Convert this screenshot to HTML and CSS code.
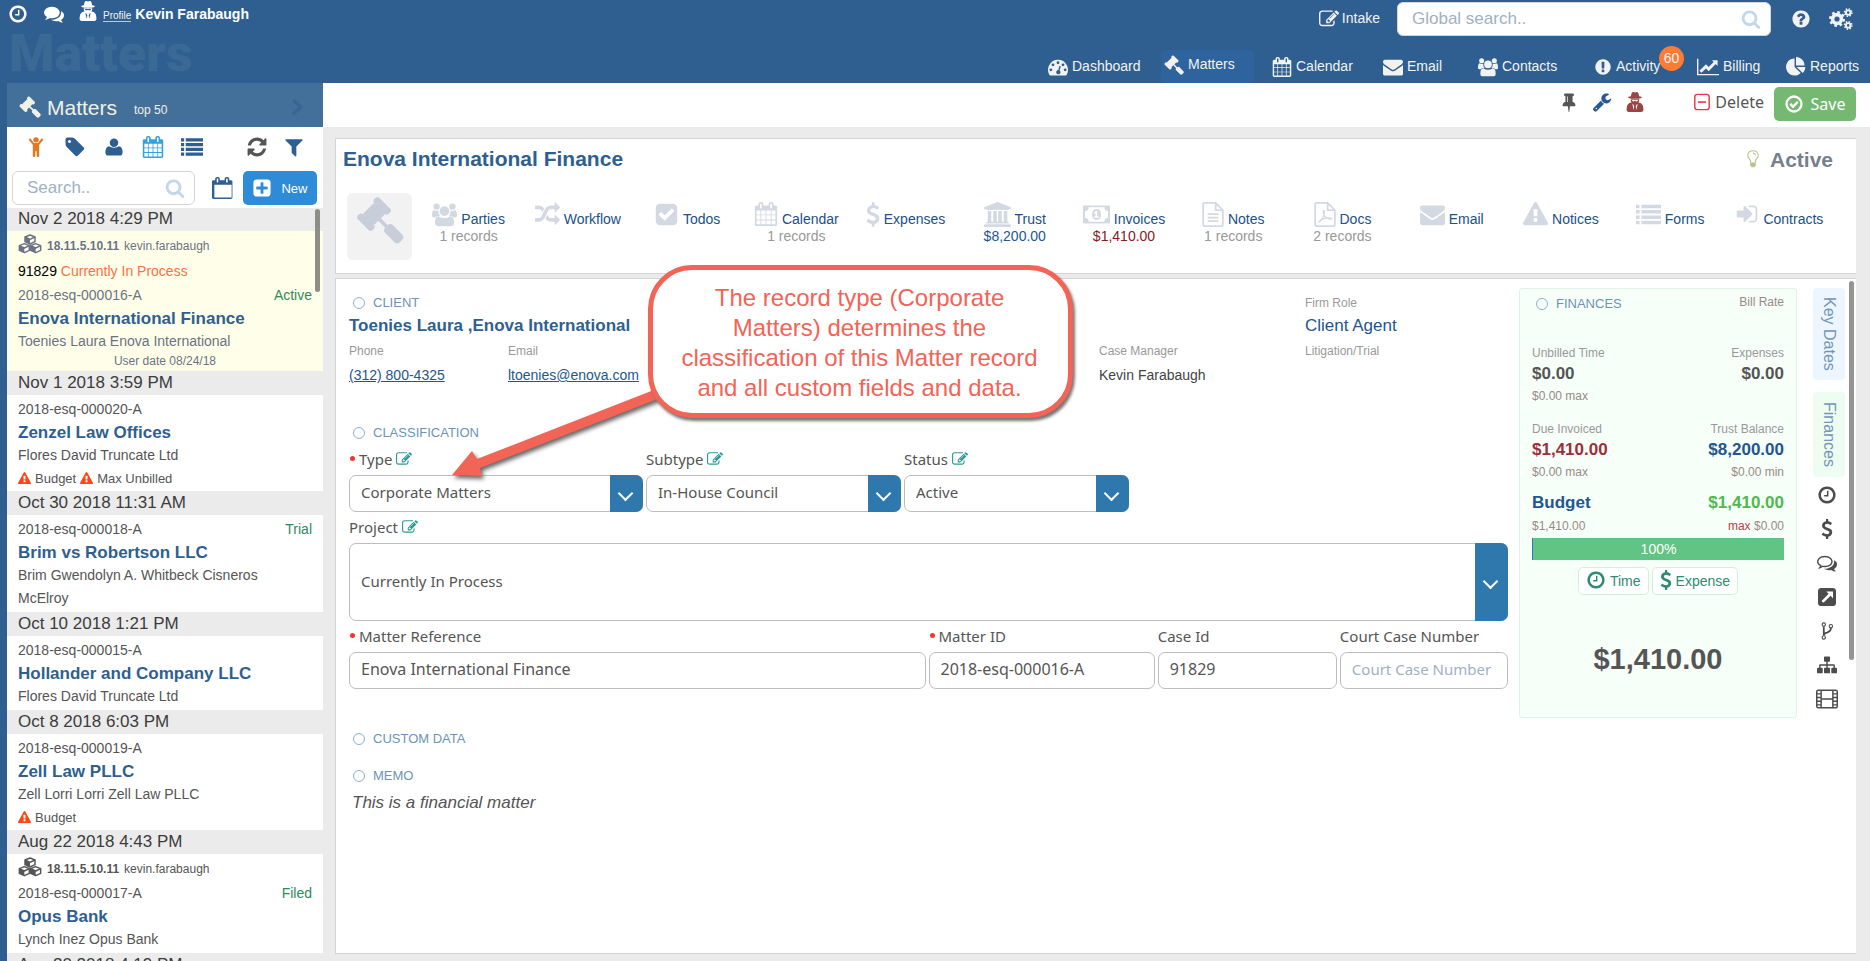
FILE: index.html
```html
<!DOCTYPE html>
<html lang="en">
<head>
<meta charset="utf-8">
<title>Matters</title>
<link rel="stylesheet" href="styles.css">
</head>
<body>
<svg class="sprite" aria-hidden="true">
  <symbol id="clock" viewBox="0 0 1792 1792"><path d="M1024 544v448q0 14-9 23t-23 9h-320q-14 0-23-9t-9-23v-64q0-14 9-23t23-9h224v-352q0-14 9-23t23-9h64q14 0 23 9t9 23zm416 352q0-148-73-273t-198-198-273-73-273 73-198 198-73 273 73 273 198 198 273 73 273-73 198-198 73-273zm224 0q0 209-103 385.500t-279.500 279.500-385.500 103-385.500-103-279.500-279.500-103-385.500 103-385.500 279.500-279.500 385.500-103 385.500 103 279.500 279.500 103 385.500z"/></symbol>
  <symbol id="search" viewBox="0 0 1792 1792"><path d="M1216 832q0-185-131.500-316.500t-316.500-131.500-316.500 131.500-131.500 316.500 131.500 316.500 316.500 131.500 316.500-131.500 131.500-316.500zm512 832q0 52-38 90t-90 38q-54 0-90-38l-343-342q-179 124-399 124-143 0-273.500-55.500t-225-150-150-225-55.500-273.500 55.500-273.500 150-225 225-150 273.500-55.500 273.500 55.500 225 150 150 225 55.500 273.500q0 220-124 399l343 343q37 37 37 90z"/></symbol>
  <symbol id="envelope" viewBox="0 0 1792 1792"><path d="M1792 710v794q0 66-47 113t-113 47h-1472q-66 0-113-47t-47-113v-794q44 49 101 87 362 246 497 345 57 42 92.500 65.500t94.500 48 110 24.500h2q51 0 110-24.500t94.500-48 92.500-65.500q170-123 498-345 57-39 100-87zm0-294q0 79-49 151t-122 123q-376 261-468 325-10 7-42.500 31t-54 38.500-52 32.500-57.500 27-50 9h-2q-23 0-50-9t-57.500-27-52-32.500-54-38.500-42.500-31q-91-64-262-182.500t-205-142.500q-62-42-117-115.500t-55-136.500q0-78 41.500-130t118.500-52h1472q65 0 112.500 47t47.500 113z"/></symbol>
  <symbol id="calendar" viewBox="0 0 1792 1792"><path d="M192 1664h288v-288h-288v288zm352 0h320v-288h-320v288zm-352-352h288v-320h-288v320zm352 0h320v-320h-320v320zm-352-384h288v-288h-288v288zm736 736h320v-288h-320v288zm-384-736h320v-288h-320v288zm768 736h288v-288h-288v288zm-384-352h320v-320h-320v320zm-352-864v-288q0-13-9.500-22.500t-22.500-9.500h-64q-13 0-22.500 9.500t-9.500 22.500v288q0 13 9.500 22.500t22.500 9.500h64q13 0 22.500-9.500t9.500-22.500zm736 864h288v-320h-288v320zm-384-384h320v-288h-320v288zm384 0h288v-288h-288v288zm32-480v-288q0-13-9.500-22.500t-22.500-9.500h-64q-13 0-22.500 9.500t-9.500 22.500v288q0 13 9.500 22.500t22.500 9.500h64q13 0 22.500-9.500t9.500-22.500zm384-64v1280q0 52-38 90t-90 38h-1408q-52 0-90-38t-38-90v-1280q0-52 38-90t90-38h128v-96q0-66 47-113t113-47h64q66 0 113 47t47 113v96h384v-96q0-66 47-113t113-47h64q66 0 113 47t47 113v96h128q52 0 90 38t38 90z"/></symbol>
  <symbol id="calendar-o" viewBox="0 0 1792 1792"><path fill-rule="evenodd" d="M192 1664h1408v-1024h-1408zM128 256h128v-96q0-66 47-113t113-47h64q66 0 113 47t47 113v96h384v-96q0-66 47-113t113-47h64q66 0 113 47t47 113v96h128q52 0 90 38t38 90v1280q0 52-38 90t-90 38h-1408q-52 0-90-38t-38-90v-1280q0-52 38-90t90-38zM384 160v256q0 32 32 32h64q32 0 32-32v-256q0-32-32-32h-64q-32 0-32 32zM1152 160v256q0 32 32 32h64q32 0 32-32v-256q0-32-32-32h-64q-32 0-32 32z"/></symbol>
  <symbol id="gavel" viewBox="0 0 1792 1792"><path d="M1771 1536q0 53-37 90l-107 108q-39 37-91 37-53 0-90-37l-363-364q-38-36-38-90 0-53 43-96l-256-256-126 126q-14 14-34 14t-34-14q2 2 12.500 12t12.500 13 10 11.500 10 13.500 6 13.500 5.500 16.500 1.500 18q0 38-28 68-3 3-16.500 18t-19 20.500-18.500 16.500-22 15.500-22 9-26 4.500q-40 0-68-28l-408-408q-28-28-28-68 0-13 4.500-26t9-22 15.500-22 16.500-18.500 20.500-19 18-16.500q30-28 68-28 10 0 18 1.500t16.500 5.500 13.500 6 13.500 10 11.500 10 13 12.500 12 12.500q-14-14-14-34t14-34l348-348q14-14 34-14t34 14q-2-2-12.500-12t-12.500-13-10-11.500-10-13.500-6-13.500-5.500-16.500-1.500-18q0-38 28-68 3-3 16.500-18t19-20.500 18.500-16.500 22-15.500 22-9 26-4.500q40 0 68 28l408 408q28 28 28 68 0 13-4.500 26t-9 22-15.500 22-16.500 18.500-20.500 19-18 16.500q-30 28-68 28-10 0-18-1.500t-16.500-5.500-13.500-6-13.500-10-11.500-10-13-12.500-12-12.500q14 14 14 34t-14 34l-126 126 256 256q43-43 96-43 52 0 91 37l363 363q37 39 37 91z"/></symbol>
  <symbol id="warning" viewBox="0 0 1792 1792"><path d="M1024 1375v-190q0-14-9.500-23.500t-22.500-9.500h-192q-13 0-22.500 9.500t-9.500 23.500v190q0 14 9.500 23.500t22.500 9.500h192q13 0 22.500-9.500t9.500-23.500zm-2-374l18-459q0-12-10-19-13-11-24-11h-220q-11 0-24 11-10 7-10 21l17 457q0 10 10 16.500t24 6.500h185q14 0 23.500-6.500t10.500-16.500zm-14-934l768 1408q35 63-2 126-17 29-46.500 46t-63.500 17h-1536q-34 0-63.500-17t-46.500-46q-37-63-2-126l768-1408q17-31 47-49t65-18 65 18 47 49z"/></symbol>
  <symbol id="tag" viewBox="0 0 1792 1792"><path d="M576 448q0-53-37.500-90.500t-90.500-37.500-90.500 37.500-37.500 90.500 37.500 90.500 90.500 37.500 90.500-37.500 37.500-90.500zm1067 576q0 53-37 90l-491 492q-39 37-91 37-53 0-90-37l-715-716q-38-37-64.500-101t-26.500-117v-416q0-52 38-90t90-38h416q53 0 117 26.500t102 64.500l715 714q37 39 37 91z"/></symbol>
  <symbol id="user" viewBox="0 0 1792 1792"><path d="M1664 1399q0 109-62.500 187t-150.500 78h-1110q-88 0-150.500-78t-62.500-187q0-85 8.500-160.500t31.500-152 58.500-131 94-89 134.500-34.500q171 128 441 128t441-128q76 0 134.500 34.500t94 89 58.500 131 31.500 152 8.500 160.500zm-384-887q0 159-112.500 271.500t-271.500 112.500-271.500-112.500-112.500-271.500 112.500-271.500 271.500-112.500 271.500 112.500 112.500 271.500z"/></symbol>
  <symbol id="filter" viewBox="0 0 1792 1792"><path d="M1595 295q17 41-14 70l-493 493v742q0 42-39 59-13 5-25 5-27 0-45-19l-256-256q-19-19-19-45v-486l-493-493q-31-29-14-70 17-39 59-39h1280q42 0 59 39z"/></symbol>
  <symbol id="refresh" viewBox="0 0 1792 1792"><path d="M1639 1056q0 5-1 7-64 268-268 434.500t-478 166.500q-146 0-282.500-55t-243.500-157l-129 129q-19 19-45 19t-45-19-19-45v-448q0-26 19-45t45-19h448q26 0 45 19t19 45-19 45l-137 137q71 66 161 102t187 36q134 0 250-65t186-179q11-17 53-117 8-23 30-23h192q13 0 22.500 9.500t9.500 22.500zm25-800v448q0 26-19 45t-45 19h-448q-26 0-45-19t-19-45 19-45l138-138q-148-137-349-137-134 0-250 65t-186 179q-11 17-53 117-8 23-30 23h-199q-13 0-22.500-9.500t-9.500-22.500v-7q65-268 270-434.500t480-166.500q146 0 284 55.500t245 156.500l130-129q19-19 45-19t45 19 19 45z"/></symbol>
  <symbol id="comments" viewBox="0 0 1792 1792"><path d="M1408 768q0 139-94 257t-256.500 186.500-353.500 68.500q-86 0-176-16-124 88-278 128-36 9-86 16h-3q-11 0-20.500-8t-11.500-21q-1-3-1-6.500t.5-6.500 2-6l2.500-5 3.500-5.500 4-5 4.500-5 4-4.500q5-6 23-25t26-29.500 22.500-29 25-38.500 20.500-44q-124-72-195-177t-71-224q0-139 94-257t256.500-186.500 353.500-68.500 353.500 68.500 256.500 186.500 94 257zm384 256q0 120-71 224.500t-195 176.500q10 24 20.500 44t25 38.500 22.500 29 26 29.500 23 25q1 1 4 4.500t4.500 5 4 5 3.500 5.500l2.500 5 2 6 .5 6.500-1 6.500q-3 14-13 22t-22 7q-50-7-86-16-154-40-278-128-90 16-176 16-271 0-472-132 58 4 88 4 161 0 309-45t264-129q125-92 192-212t67-254q0-77-23-152 129 71 204 178t75 230z"/></symbol>
  <symbol id="comments-o" viewBox="0 0 1792 1792"><path d="M704 384q-153 0-286 52t-211.500 141-78.500 191q0 82 53 158t149 132l97 56-35 84q34-20 62-39l44-31 53 10q78 14 153 14 153 0 286-52t211.500-141 78.500-191-78.500-191-211.500-141-286-52zm0-128q191 0 353.500 68.500t256.500 186.500 94 257-94 257-256.500 186.500-353.500 68.500q-86 0-176-16-124 88-278 128-36 9-86 16h-3q-11 0-20.500-8t-11.500-21q-1-3-1-6.500t.5-6.500 2-6l2.500-5 3.500-5.500 4-5 4.500-5 4-4.500q5-6 23-25t26-29.500 22.500-29 25-38.500 20.500-44q-124-72-195-177t-71-224q0-139 94-257t256.500-186.500 353.500-68.500zm822 1169q10 24 20.500 44t25 38.500 22.500 29 26 29.500 23 25q1 1 4 4.500t4.500 5 4 5 3.500 5.500l2.500 5 2 6 .5 6.500-1 6.500q-3 14-13 22t-22 7q-50-7-86-16-154-40-278-128-90 16-176 16-271 0-472-132 58 4 88 4 161 0 309-45t264-129q125-92 192-212t67-254q0-77-23-152 129 71 204 178t75 230q0 120-71 224.500t-195 176.500z"/></symbol>
  <symbol id="edit" viewBox="0 0 1792 1792"><path d="M888 1184l116-116-152-152-116 116v56h96v96h56zm440-720q-16-16-33 1l-350 350q-17 17-1 33t33-1l350-350q17-17 1-33zm80 594v190q0 119-84.500 203.500t-203.500 84.500h-832q-119 0-203.500-84.500t-84.500-203.500v-832q0-119 84.500-203.500t203.500-84.500h832q63 0 117 25 15 7 18 23 3 17-9 29l-49 49q-14 14-32 8-23-6-45-6h-832q-66 0-113 47t-47 113v832q0 66 47 113t113 47h832q66 0 113-47t47-113v-126q0-13 9-22l64-64q15-15 35-7t20 29zm-96-738l288 288-672 672h-288v-288zm444 132l-92 92-288-288 92-92q28-28 68-28t68 28l152 152q28 28 28 68t-28 68z"/></symbol>
  <symbol id="question" viewBox="0 0 1792 1792"><path d="M1024 1376v-192q0-14-9-23t-23-9h-192q-14 0-23 9t-9 23v192q0 14 9 23t23 9h192q14 0 23-9t9-23zm256-672q0-88-55.500-163t-138.500-116-170-41q-243 0-371 213-15 24 8 42l132 100q7 6 19 6 16 0 25-12 53-68 86-92 34-24 86-24 48 0 85.500 26t37.500 59q0 38-20 61t-68 45q-63 28-115.500 86.500t-52.500 125.500v36q0 14 9 23t23 9h192q14 0 23-9t9-23q0-19 21.500-49.500t54.500-49.500q32-18 49-28.500t46-35 44.500-48 28-60.500 12.500-81zm384 192q0 209-103 385.500t-279.500 279.500-385.500 103-385.500-103-279.500-279.500-103-385.500 103-385.500 279.500-279.500 385.500-103 385.500 103 279.500 279.500 103 385.500z"/></symbol>
  <symbol id="exclaim" viewBox="0 0 1792 1792"><path d="M896 128q209 0 385.500 103t279.500 279.500 103 385.500-103 385.500-279.500 279.500-385.500 103-385.500-103-279.500-279.500-103-385.500 103-385.500 279.500-279.500 385.500-103zm128 1247v-190q0-14-9-23.500t-22-9.500h-192q-13 0-23 10t-10 23v190q0 13 10 23t23 10h192q13 0 22-9.500t9-23.500zm-2-344l18-621q0-12-10-18-10-8-24-8h-220q-14 0-24 8-10 6-10 18l17 621q0 10 10 17.500t24 7.500h185q14 0 23.500-7.500t10.500-17.500z"/></symbol>
  <symbol id="plus-square" viewBox="0 0 1792 1792"><path d="M1408 960v-128q0-26-19-45t-45-19h-320v-320q0-26-19-45t-45-19h-128q-26 0-45 19t-19 45v320h-320q-26 0-45 19t-19 45v128q0 26 19 45t45 19h320v320q0 26 19 45t45 19h128q26 0 45-19t19-45v-320h320q26 0 45-19t19-45zm256-544v960q0 119-84.500 203.500t-203.500 84.500h-960q-119 0-203.500-84.500t-84.500-203.500v-960q0-119 84.500-203.500t203.500-84.500h960q119 0 203.500 84.500t84.500 203.500z"/></symbol>
  <symbol id="check-square" viewBox="0 0 1792 1792"><path d="M813 1299l614-614q19-19 19-45t-19-45l-102-102q-19-19-45-19t-45 19l-467 467-211-211q-19-19-45-19t-45 19l-102 102q-19 19-19 45t19 45l358 358q19 19 45 19t45-19zm851-883v960q0 119-84.500 203.500t-203.500 84.500h-960q-119 0-203.500-84.500t-84.500-203.500v-960q0-119 84.500-203.500t203.500-84.500h960q119 0 203.500 84.500t84.500 203.500z"/></symbol>
  <symbol id="random" viewBox="0 0 1792 1792"><path d="M666 481q-60 92-137 273-22-45-37-72.500t-40.500-63.500-51-56.500-63-35-81.500-14.500h-224q-14 0-23-9t-9-23v-192q0-14 9-23t23-9h224q250 0 410 225zm1126 799q0 14-9 23l-320 320q-9 9-23 9-13 0-22.500-9.500t-9.500-22.500v-192q-32 0-85 .5t-81 1-73-1-71-5-64-10.500-63-18.500-58-28.500-59-40-55-53.500-56-69.500q59-93 136-273 22 45 37 72.500t40.500 63.500 51 56.500 63 35 81.500 14.500h256v-192q0-14 9-23t23-9q12 0 24 10l319 319q9 9 9 23zm0-896q0 14-9 23l-320 320q-9 9-23 9-13 0-22.500-9.500t-9.500-22.500v-192h-256q-48 0-87 15t-69 45-51 61.500-45 77.500q-32 62-78 171-29 66-49.500 111t-54 105-64 100-74 83-90 68.500-106.500 42-128 16.500h-224q-14 0-23-9t-9-23v-192q0-14 9-23t23-9h224q48 0 87-15t69-45 51-61.500 45-77.500q32-62 78-171 29-66 49.500-111t54-105 64-100 74-83 90-68.500 106.500-42 128-16.500h256v-192q0-14 9-23t23-9q12 0 24 10l319 319q9 9 9 23z"/></symbol>
  <symbol id="usd" viewBox="384 0 1024 1792"><path d="M1362 1185q0 153-99.500 263.500t-258.500 136.500v175q0 14-9 23t-23 9h-135q-13 0-22.500-9.500t-9.500-22.500v-175q-66-9-127.500-31t-101.500-44.500-74-48-46.500-37.500-17.500-18q-17-21-2-41l103-135q7-10 23-12 15-2 24 9l2 2q113 99 243 125 37 8 74 8 81 0 142.500-43t61.500-122q0-28-15-53t-33.500-42-58.500-37.500-66-32-80-32.500q-39-16-61.500-25t-61.500-26.500-62.500-31-56.500-35.500-53.500-42.500-43.500-49-35.500-58-21-66.500-8.500-78q0-138 98-242t255-134v-180q0-13 9.500-22.500t22.500-9.500h135q14 0 23 9t9 23v176q57 6 110.500 23t87 33.500 63.500 37.500 39 29 15 14q17 18 5 38l-81 146q-8 15-23 16-14 3-27-7-3-3-14.500-12t-39-26.500-58.500-32-74.500-26-85.500-11.500q-95 0-155 43t-60 111q0 26 8.500 48t29.500 41.500 39.500 33 56 31 60.500 27 70 27.500q53 20 81 31.500t76 35 75.500 42.500 62 50 53 63.500 31.500 76.500 13 94z"/></symbol>
  <symbol id="sign-in" viewBox="0 0 1792 1792"><path d="M1312 896q0 26-19 45l-544 544q-19 19-45 19t-45-19-19-45v-288h-448q-26 0-45-19t-19-45v-384q0-26 19-45t45-19h448v-288q0-26 19-45t45-19 45 19l544 544q19 19 19 45zm352-352v704q0 119-84.500 203.500t-203.500 84.500h-320q-13 0-22.500-9.500t-9.500-22.500q0-4-1-20t-.5-26.500 3-23.500 10-19.500 20.500-6.500h320q66 0 113-47t47-113v-704q0-66-47-113t-113-47h-312l-11.500-1-11.500-3-8-5.500-7-9-2-13.500q0-4-1-20t-.5-26.500 3-23.500 10-19.500 20.500-6.500h320q119 0 203.500 84.500t84.500 203.500z"/></symbol>
  <symbol id="pin" viewBox="0 0 1792 1792"><path d="M800 864v-448q0-14-9-23t-23-9-23 9-9 23v448q0 14 9 23t23 9 23-9 9-23zm672 352q0 26-19 45t-45 19h-429l-51 483q-2 12-10.500 20.500t-20.500 8.500h-1q-27 0-32-27l-76-485h-404q-26 0-45-19t-19-45q0-123 78.500-221.500t177.500-98.500v-512q-52 0-90-38t-38-90 38-90 90-38h640q52 0 90 38t38 90-38 90-90 38v512q99 0 177.500 98.500t78.500 221.500z"/></symbol>
  <symbol id="wrench" viewBox="0 0 1792 1792"><path d="M448 1472q0-26-19-45t-45-19-45 19-19 45 19 45 45 19 45-19 19-45zm644-420l-682 682q-37 37-90 37-52 0-91-37l-106-108q-38-36-38-90 0-53 38-91l681-681q39 98 114.500 173.500t173.500 114.500zm634-435q0 39-23 106-47 134-164.500 217.500t-258.500 83.500q-185 0-316.500-131.500t-131.500-316.500 131.500-316.500 316.500-131.500q58 0 121.500 16.500t107.500 46.500q16 11 16 28t-16 28l-293 169v224l193 107q5-3 79-48.500t135.500-81 70.500-35.500q15 0 23.500 10t8.500 25z"/></symbol>
  <symbol id="line-chart" viewBox="0 0 2048 1792"><path d="M2048 1536v128h-2048v-1536h128v1408h1920zm-128-1248v435q0 21-19.500 29.500t-35.500-7.500l-121-121-633 633q-10 10-23 10t-23-10l-233-233-416 416-192-192 585-585q10-10 23-10t23 10l233 233 464-464-121-121q-16-16-7.500-35.500t29.500-19.500h435q14 0 23 9t9 23z"/></symbol>
  <symbol id="pie-chart" viewBox="0 0 1792 1792"><path d="M768 890l546 546q-106 108-247.500 168t-298.500 60q-209 0-385.500-103t-279.500-279.500-103-385.500 103-385.500 279.500-279.500 385.500-103v762zm187 6h773q0 157-60 298.500t-168 247.500zm709-128h-768v-768q209 0 385.500 103t279.500 279.500 103 385.500z"/></symbol>
  <symbol id="list" viewBox="0 0 28 24"><path d="M0 1h4v4H0zM6 1h22v4H6zM0 7h4v4H0zM6 7h22v4H6zM0 13h4v4H0zM6 13h22v4H6zM0 19h4v4H0zM6 19h22v4H6z"/></symbol>
  <symbol id="dash" viewBox="0 0 28 24"><path fill-rule="evenodd" d="M14 2a14 14 0 0 1 11.700 21.500q-.3.500-1 .5H3.300q-.7 0-1-.5A14 14 0 0 1 14 2zM4 14a2 2 0 1 0 0 4 2 2 0 0 0 0-4zM7 7a2 2 0 1 0 0 4 2 2 0 0 0 0-4zM14 4a2 2 0 1 0 0 4 2 2 0 0 0 0-4zM21 7a2 2 0 1 0 0 4 2 2 0 0 0 0-4zM24 14a2 2 0 1 0 0 4 2 2 0 0 0 0-4zM16 10.300l-1.600 6a3 3 0 1 0 1.900.6l1.600-6.100z"/></symbol>
  <symbol id="users" viewBox="0 0 30 28"><circle cx="5.500" cy="4.500" r="3.800"/><circle cx="24.500" cy="4.500" r="3.800"/><path d="M2 8.500q3.500 2 6 .5-1 4 2 6.500-4-.3-6 2H2q-2 0-2-2 0-6 2-7zM28 8.500q-3.500 2-6 .5 1 4-2 6.500 4-.3 6 2h2q2 0 2-2 0-6-2-7z"/><circle cx="15" cy="10" r="5.800"/><path d="M8 16q7 4.500 14 0 4.500.5 4.500 8 0 4-4 4h-15q-4 0-4-4 0-7.500 4.500-8z"/></symbol>
  <symbol id="cogs" viewBox="0 0 30 28"><g fill="none" stroke="currentColor"><circle cx="10" cy="14" r="5.500" stroke-width="4.500"/><circle cx="10" cy="14" r="8.500" stroke-width="3" stroke-dasharray="3.340 3.340"/><circle cx="24" cy="6" r="2.800" stroke-width="2.400"/><circle cx="24" cy="6" r="4.600" stroke-width="2" stroke-dasharray="1.806 1.806"/><circle cx="24" cy="22" r="2.800" stroke-width="2.400"/><circle cx="24" cy="22" r="4.600" stroke-width="2" stroke-dasharray="1.806 1.806"/></g></symbol>
  <symbol id="spy" viewBox="0 0 22 26"><path d="M6.500 1.500Q8-.8 11 .8q3-1.600 4.500.7l.8 4 3 .8q1 .7 0 1.400l-3.300 1H6l-3.300-1q-1-.7 0-1.400l3-.8z"/><path fill-rule="evenodd" d="M5.500 9.500h11q.5 2.500-1 4.300 6.500.7 6.500 8.700 0 3.500-3 3.500H3q-3 0-3-3.500 0-8 6.500-8.700-1.500-1.800-1-4.300zM7 10.500q.3 1.700 1.900 1.700 1.300 0 2.100-1.300.8 1.300 2.100 1.300 1.600 0 1.900-1.700zM7.500 15.800l2 7.700.5-5-1-2.200zM14.500 15.800l-2 7.700-.5-5 1-2.200z"/></symbol>
  <symbol id="child" viewBox="0 0 20 28"><circle cx="10" cy="4" r="3.800"/><path d="M2.600 2.500L7 8.500h6l4.400-6q1-1 2 0 .9.900.3 2L14.500 11v16q-.3 1-1.700 1-1.500 0-1.800-1v-7H9v7q-.3 1-1.800 1-1.400 0-1.700-1V11L.3 4.500q-.6-1.100.3-2 1-1 2 0z"/></symbol>
  <symbol id="cubes" viewBox="0 0 36 30"><g fill="none" stroke="currentColor" stroke-width="2.200" stroke-linejoin="round"><path d="M18 1.500l7.500 3v7L18 15l-7.500-3.500v-7zM9.500 14.500l7.500 3v7L9.500 28 2 24.500v-7zM26.500 14.500l7.500 3v7L26.500 28 19 24.500v-7z"/><path d="M10.500 4.500L18 8l7.500-3.500M2 17.500L9.500 21l7.500-3.500M19 17.500l7.500 3.500 7.500-3.500"/></g><path d="M18 8v7l-7.500-3.500v-7zM9.500 21v7L2 24.500v-7zM26.500 21v7L19 24.500v-7z"/></symbol>
  <symbol id="bank" viewBox="0 0 30 28"><path d="M15 0l15 6v2h-2.500q0 1-1 1h-23q-1 0-1-1H0V6zM4 10h4v12h2.200V10h4v12h1.600V10h4v12H22V10h4v12h.5q1 0 1 1v1h-25v-1q0-1 1-1H4zM1.500 25h27q1.500 0 1.500 1v2H0v-2q0-1 1.500-1z"/></symbol>
  <symbol id="money" viewBox="0 0 30 20"><path fill-rule="evenodd" d="M1 0h28q1 0 1 1v18q0 1-1 1H1q-1 0-1-1V1q0-1 1-1zM2.200 6v8q4 0 4 4h17.600q0-4 4-4V6q-4 0-4-4H6.200q0 4-4 4zM15 4q5 0 5 6t-5 6-5-6 5-6zM12.500 12v1.700h5V12h-1.700V6h-1.600L12 8l1 1.200 1-.7V12z"/></symbol>
  <symbol id="file-text" viewBox="0 0 24 28"><g fill="none" stroke="currentColor" stroke-width="2"><path d="M2.500 1H15l8 8v16.500q0 1.500-1.500 1.500h-19Q1 27 1 25.500v-23Q1 1 2.500 1zM15 1v8h8M6 13.500h12M6 17.500h12M6 21.500h12"/></g></symbol>
  <symbol id="file-pdf" viewBox="0 0 24 28"><g fill="none" stroke="currentColor" stroke-width="2"><path d="M2.500 1H15l8 8v16.500q0 1.500-1.500 1.500h-19Q1 27 1 25.500v-23Q1 1 2.500 1zM15 1v8h8"/><path stroke-width="1.300" d="M5 23q3-1.500 5.500-7.500Q12 11 11 9.500q-1-.5-1 1.500.5 5 5 7.500 4 1.500 4.500.5 0-1.500-4.500-1.200-5 .7-8 2.200Q5 21.500 5 23"/></g></symbol>
  <symbol id="check-circle" viewBox="0 0 20 20"><g fill="none" stroke="currentColor"><circle cx="10" cy="10" r="8.300" stroke-width="2.600"/><path stroke-width="2.600" d="M5.800 9.800l3.200 3.200 5.200-5.500"/></g></symbol>
  <symbol id="minus-square" viewBox="0 0 18 20"><rect x="1" y="1.500" width="16" height="17" rx="3" fill="none" stroke="currentColor" stroke-width="1.600"/><path d="M4.500 9.200h9v1.800h-9z"/></symbol>
  <symbol id="bulb" viewBox="0 0 16 24"><path fill="none" stroke="currentColor" stroke-width="1.500" d="M5 16.500q0-3-2-5Q1 9.500 1 7.200 1.500 1 8 1t7 6.200q0 2.300-2 4.300t-2 5M8 4.200q3 .3 3.300 2.800"/><path d="M4.200 16.500h7.600v4.300L9.500 23h-3l-2.300-2.200z"/></symbol>
  <symbol id="external" viewBox="0 0 24 24"><path fill-rule="evenodd" d="M4.500 0h15Q24 0 24 4.500v15q0 4.500-4.500 4.500h-15Q0 24 0 19.500v-15Q0 0 4.500 0zM11 4.500l3.200 3.200-9.500 9.500 2.600 2.600 9.500-9.500 3.200 3.200v-9z"/></symbol>
  <symbol id="fork" viewBox="0 0 20 28"><g fill="none" stroke="currentColor"><g stroke-width="1.700"><circle cx="5" cy="4" r="2.600"/><circle cx="5" cy="24" r="2.600"/><circle cx="16" cy="6.500" r="2.600"/></g><path stroke-width="2.800" d="M5 7v14q0-3.500 5-4.500 6-1.500 6-7"/></g></symbol>
  <symbol id="sitemap" viewBox="0 0 28 24"><path d="M11 0h6q1.200 0 1.200 1.200v5Q18.200 7.400 17 7.400h-2V11h8.500q1.500 0 1.500 1.500V16h1.500q1.500 0 1.500 1.200v5.200q0 1.200-1.500 1.200h-5q-1.500 0-1.500-1.200v-5.200q0-1.200 1.500-1.200H23v-3h-8v3h2q1.200 0 1.200 1.200v5.200q0 1.200-1.200 1.200h-6q-1.200 0-1.200-1.200v-5.200Q9.800 16 11 16h2v-3H5v3h1.500Q8 16 8 17.200v5.200q0 1.200-1.500 1.200h-5Q0 23.600 0 22.400v-5.200Q0 16 1.500 16H3v-3.500Q3 11 4.500 11H13V7.400h-2q-1.200 0-1.200-1.200v-5Q9.800 0 11 0z"/></symbol>
  <symbol id="film" viewBox="0 0 30 26"><g fill="none" stroke="currentColor" stroke-width="2"><rect x="1" y="1" width="28" height="24" rx="2"/><path d="M7 1v24M23 1v24M7 13h16M1 6h6M1 11h6M1 16h6M1 21h6M23 6h6M23 11h6M23 16h6M23 21h6"/></g></symbol>
</svg>

<div class="app">
  <header class="top">
    <div class="top-left">
      <div class="who">
        <svg class="i20 first"><use href="#clock"/></svg>
        <svg class="i20"><use href="#comments"/></svg>
        <svg class="i18 tall"><use href="#spy"/></svg>
        <a class="profile" href="#">Profile</a>
        <strong>Kevin Farabaugh</strong>
      </div>
      <div class="watermark">Matters</div>
    </div>
    <div class="top-right">
      <div class="tools">
        <a class="intake" href="#"><svg class="i20"><use href="#edit"/></svg>Intake</a>
        <div class="search global"><input type="text" aria-label="Global search" placeholder="Global search.."><svg class="i20"><use href="#search"/></svg></div>
        <a class="help" href="#" aria-label="Help"><svg class="i20"><use href="#question"/></svg></a>
        <a href="#" aria-label="Settings"><svg class="i24"><use href="#cogs"/></svg></a>
      </div>
      <nav class="nav">
        <a href="#"><svg class="i20"><use href="#dash"/></svg>Dashboard</a>
        <a class="on" href="#"><svg class="i20"><use href="#gavel"/></svg>Matters</a>
        <a href="#"><svg class="i20"><use href="#calendar"/></svg>Calendar</a>
        <a href="#"><svg class="i20"><use href="#envelope"/></svg>Email</a>
        <a href="#"><svg class="i20"><use href="#users"/></svg>Contacts</a>
        <a href="#"><svg class="i18"><use href="#exclaim"/></svg><span class="has-badge">Activity<span class="badge">60</span></span></a>
        <a href="#"><svg class="i22"><use href="#line-chart"/></svg>Billing</a>
        <a href="#"><svg class="i20"><use href="#pie-chart"/></svg>Reports</a>
      </nav>
    </div>
  </header>

  <div class="body">
    <aside class="side">
      <div class="side-head">
        <svg class="i22"><use href="#gavel"/></svg><h1>Matters</h1><span>top 50</span>
        <svg class="chev" viewBox="0 0 12 18"><path d="M2 2l8 7-8 7" fill="none" stroke="currentColor" stroke-width="3"/></svg>
      </div>
      <div class="side-tools">
        <button class="orange" aria-label="Child"><svg class="i20"><use href="#child"/></svg></button>
        <button aria-label="Tags"><svg class="i22"><use href="#tag"/></svg></button>
        <button aria-label="People"><svg class="i20"><use href="#user"/></svg></button>
        <button class="sky" aria-label="Calendar"><svg class="i22"><use href="#calendar"/></svg></button>
        <button aria-label="List"><svg class="i22"><use href="#list"/></svg></button>
        <button class="grey end" aria-label="Refresh"><svg class="i22"><use href="#refresh"/></svg></button>
        <button aria-label="Filter"><svg class="i22"><use href="#filter"/></svg></button>
      </div>
      <div class="side-search">
        <div class="search"><input type="text" aria-label="Search" placeholder="Search.."><svg class="i20"><use href="#search"/></svg></div>
        <button class="cal" aria-label="Pick date"><svg class="i22"><use href="#calendar-o"/></svg></button>
        <button class="new"><svg class="i20"><use href="#plus-square"/></svg>New</button>
      </div>
      <div class="list">
        <div class="thumb"></div>
        <h2>Nov 2 2018 4:29 PM</h2>
        <div class="item sel">
          <div class="ver"><svg class="i24"><use href="#cubes"/></svg><b>18.11.5.10.11</b> kevin.farabaugh</div>
          <div class="proc"><span>91829</span> Currently In Process</div>
          <div class="row"><span>2018-esq-000016-A</span><span class="st">Active</span></div>
          <a href="#">Enova International Finance</a>
          <div class="row">Toenies Laura Enova International</div>
          <div class="udate">User date 08/24/18</div>
        </div>
        <h2>Nov 1 2018 3:59 PM</h2>
        <div class="item">
          <div class="row">2018-esq-000020-A</div>
          <a href="#">Zenzel Law Offices</a>
          <div class="row">Flores David Truncate Ltd</div>
          <div class="warn"><svg class="i13"><use href="#warning"/></svg>Budget<svg class="i13"><use href="#warning"/></svg>Max Unbilled</div>
        </div>
        <h2>Oct 30 2018 11:31 AM</h2>
        <div class="item">
          <div class="row"><span>2018-esq-000018-A</span><span class="st">Trial</span></div>
          <a href="#">Brim vs Robertson LLC</a>
          <div class="wrap">Brim Gwendolyn A. Whitbeck Cisneros McElroy</div>
        </div>
        <h2>Oct 10 2018 1:21 PM</h2>
        <div class="item">
          <div class="row">2018-esq-000015-A</div>
          <a href="#">Hollander and Company LLC</a>
          <div class="row">Flores David Truncate Ltd</div>
        </div>
        <h2>Oct 8 2018 6:03 PM</h2>
        <div class="item">
          <div class="row">2018-esq-000019-A</div>
          <a href="#">Zell Law PLLC</a>
          <div class="row">Zell Lorri Lorri Zell Law PLLC</div>
          <div class="warn"><svg class="i13"><use href="#warning"/></svg>Budget</div>
        </div>
        <h2>Aug 22 2018 4:43 PM</h2>
        <div class="item">
          <div class="ver"><svg class="i24"><use href="#cubes"/></svg><b>18.11.5.10.11</b> kevin.farabaugh</div>
          <div class="row"><span>2018-esq-000017-A</span><span class="st">Filed</span></div>
          <a href="#">Opus Bank</a>
          <div class="row">Lynch Inez Opus Bank</div>
        </div>
        <h2>Aug 20 2018 4:19 PM</h2>
      </div>
    </aside>

    <main class="main">
      <div class="actions">
        <button aria-label="Pin"><svg class="i20"><use href="#pin"/></svg></button>
        <button class="blue" aria-label="Tools"><svg class="i20"><use href="#wrench"/></svg></button>
        <button class="maroon" aria-label="Private"><svg class="i20"><use href="#spy"/></svg></button>
        <button class="delete"><svg class="i18"><use href="#minus-square"/></svg>Delete</button>
        <button class="save"><svg class="i18"><use href="#check-circle"/></svg>Save</button>
      </div>

      <section class="card head">
        <div class="head-top">
          <h2>Enova International Finance</h2>
          <div class="state"><svg class="bulb"><use href="#bulb"/></svg>Active</div>
        </div>
        <div class="tabs-row">
          <div class="tile"><svg><use href="#gavel"/></svg></div>
          <nav class="tabs">
            <a href="#"><span><svg class="i26"><use href="#users"/></svg>Parties</span><small>1 records</small></a>
            <a href="#"><span><svg class="i26"><use href="#random"/></svg>Workflow</span></a>
            <a href="#"><span><svg class="i26"><use href="#check-square"/></svg>Todos</span></a>
            <a href="#"><span><svg class="i24"><use href="#calendar"/></svg>Calendar</span><small>1 records</small></a>
            <a href="#"><span><svg class="dollar"><use href="#usd"/></svg>Expenses</span></a>
            <a href="#"><span><svg class="i28"><use href="#bank"/></svg>Trust</span><small class="t-blue">$8,200.00</small></a>
            <a href="#"><span><svg class="i28"><use href="#money"/></svg>Invoices</span><small class="t-red">$1,410.00</small></a>
            <a href="#"><span><svg class="i22 tall"><use href="#file-text"/></svg>Notes</span><small>1 records</small></a>
            <a href="#"><span><svg class="i22 tall"><use href="#file-pdf"/></svg>Docs</span><small>2 records</small></a>
            <a href="#"><span><svg class="i26"><use href="#envelope"/></svg>Email</span></a>
            <a href="#"><span><svg class="i26"><use href="#warning"/></svg>Notices</span></a>
            <a href="#"><span><svg class="i26"><use href="#list"/></svg>Forms</span></a>
            <a href="#"><span><svg class="i24"><use href="#sign-in"/></svg>Contracts</span></a>
          </nav>
        </div>
      </section>

      <section class="card detail">
        <div class="form">
          <div class="client">
            <div class="c-main">
              <h3 class="sec">CLIENT</h3>
              <a class="cname" href="#">Toenies Laura ,Enova International</a>
              <div class="pair">
                <div><span class="cap">Phone</span><a class="lnk" href="#">(312) 800-4325</a></div>
                <div><span class="cap">Email</span><a class="lnk" href="#">ltoenies@enova.com</a></div>
              </div>
            </div>
            <div class="c-mgr"><span class="cap">Case Manager</span><span class="val">Kevin Farabaugh</span></div>
            <div class="c-role"><span class="cap">Firm Role</span><span class="role">Client Agent</span><span class="cap">Litigation/Trial</span></div>
          </div>

          <h3 class="sec classif">CLASSIFICATION</h3>
          <div class="grid3">
            <div class="field"><label class="req" for="type">Type <svg class="i16"><use href="#edit"/></svg></label><div class="sel-box"><select id="type"><option>Corporate Matters</option></select></div></div>
            <div class="field"><label for="sub">Subtype <svg class="i16"><use href="#edit"/></svg></label><div class="sel-box"><select id="sub"><option>In-House Council</option></select></div></div>
            <div class="field"><label for="status">Status <svg class="i16"><use href="#edit"/></svg></label><div class="sel-box"><select id="status"><option>Active</option></select></div></div>
          </div>
          <div class="field"><label for="project">Project <svg class="i16"><use href="#edit"/></svg></label><div class="sel-box big"><select id="project"><option>Currently In Process</option></select></div></div>
          <div class="grid4">
            <div class="field"><label class="req" for="ref">Matter Reference</label><input id="ref" type="text" value="Enova International Finance"></div>
            <div class="field"><label class="req" for="mid">Matter ID</label><input id="mid" type="text" value="2018-esq-000016-A"></div>
            <div class="field"><label for="cid">Case Id</label><input id="cid" type="text" value="91829"></div>
            <div class="field"><label for="court">Court Case Number</label><input id="court" type="text" placeholder="Court Case Number"></div>
          </div>

          <h3 class="sec custom">CUSTOM DATA</h3>
          <h3 class="sec memo">MEMO</h3>
          <p class="memo-text">This is a financial matter</p>
        </div>

        <div class="fin">
          <div class="fr fin-top"><h3 class="sec">FINANCES</h3><span class="brown">Bill Rate</span></div>
          <div class="fr cap"><span>Unbilled Time</span><span>Expenses</span></div>
          <div class="fr num"><span>$0.00</span><span>$0.00</span></div>
          <div class="fr sub"><span>$0.00 max</span></div>
          <div class="fr cap"><span>Due Invoiced</span><span>Trust Balance</span></div>
          <div class="fr num"><span class="t-red2">$1,410.00</span><span class="t-blue">$8,200.00</span></div>
          <div class="fr sub"><span>$0.00 max</span><span>$0.00 min</span></div>
          <div class="fr num bud"><span class="t-blue">Budget</span><span class="t-green">$1,410.00</span></div>
          <div class="fr sub bud"><span>$1,410.00</span><span><i>max</i> $0.00</span></div>
          <div class="bar">100%</div>
          <div class="fbtns">
            <button><svg class="i20"><use href="#clock"/></svg>Time</button>
            <button><svg class="d20"><use href="#usd"/></svg>Expense</button>
          </div>
          <div class="total">$1,410.00</div>
        </div>

        <div class="rail">
          <a class="vt key" href="#">Key Dates</a>
          <a class="vt finv" href="#">Finances</a>
          <button aria-label="Time"><svg class="i20"><use href="#clock"/></svg></button>
          <button aria-label="Expense"><svg class="d20"><use href="#usd"/></svg></button>
          <button aria-label="Comments"><svg class="i20"><use href="#comments-o"/></svg></button>
          <button aria-label="Open"><svg class="i18"><use href="#external"/></svg></button>
          <button aria-label="Branch"><svg class="i18"><use href="#fork"/></svg></button>
          <button aria-label="Sitemap"><svg class="i20"><use href="#sitemap"/></svg></button>
          <button aria-label="Film"><svg class="i22"><use href="#film"/></svg></button>
        </div>
        <div class="thumb"></div>

        <div class="callout">
          <svg class="arrow" viewBox="0 0 220 100"><path d="M216 8L34 79l-5-8L9 95l30 1-2-8L220 17z"/></svg>
          <div class="bubble">The record type (Corporate Matters) determines the classification of this Matter record and all custom fields and data.</div>
        </div>
      </section>
    </main>
  </div>
</div>
</body>
</html>
```
FILE: styles.css
```css
* { box-sizing: border-box; }
body { margin: 0; font: 14px/23px "Liberation Sans", Arial, sans-serif; color: #555; background: #ebebeb; }
h1, h2, h3, p { margin: 0; font-weight: normal; }
a { text-decoration: none; color: #2e5f90; }
button { border: 0; padding: 0; background: none; font: inherit; color: inherit; display: flex; align-items: center; justify-content: center; cursor: pointer; }
input, select { font: inherit; color: inherit; min-width: 0; }
svg { fill: currentColor; flex: none; display: block; }
.sprite { display: none; }
.i13 { width: 13px; height: 13px; }
.i16 { width: 16px; height: 16px; }
.i18 { width: 18px; height: 18px; }
.i20 { width: 20px; height: 20px; }
.i22 { width: 22px; height: 22px; }
.i24 { width: 24px; height: 24px; }
.i26 { width: 25px; height: 25px; }
.i28 { width: 27px; height: 25px; }
.dollar { width: 14px; height: 25px; }
.d20 { width: 12px; height: 20px; }
.i18.tall { height: 20px; }
.i22.tall { height: 25px; }

.app { height: 100vh; display: flex; flex-direction: column; overflow: hidden; }

/* Header */
.top { height: 83px; flex: none; background: #2e5f90; color: #fff; display: flex; justify-content: space-between; }
.top a { color: #f2f2f2; }
.who { display: flex; align-items: center; height: 28px; padding-left: 8px; }
.who svg { margin-right: 15px; }
.who svg.first { margin-right: 16px; }
.who svg.tall { margin: 0 6px 6px 0; }
.who .profile { font-size: 10px; line-height: 11px; border-bottom: 1px solid #b9cadb; margin: 3px 4px 0 0; }
.watermark { font: 900 52px/52px Impact, Roboto, sans-serif; color: #3b6995; padding-left: 9px; }
.top-right { display: flex; flex-direction: column; align-items: flex-end; }
.tools { display: flex; align-items: center; height: 37px; padding-right: 17px; }
.intake { display: flex; align-items: center; gap: 3px; margin-right: 17px; }
.help { margin: 0 18px 0 20px; }
.search { position: relative; display: flex; flex: 1; color: #c3d7ea; }
.search input { flex: 1; width: 100%; height: 34px; border: 1px solid #d5d5d5; border-radius: 6px; padding: 0 36px 0 14px; font-size: 17px; color: #555; background: #fff; }
.search input::placeholder { color: #9fb1c2; opacity: 1; }
.search svg { position: absolute; right: 10px; top: 7px; }
.search.global { width: 374px; flex: none; }
.nav { display: grid; grid-template-columns: 117px 107px 111px 95px 116px 103px 89px 80px; margin-top: 13px; padding-right: 8px; }
.nav a { display: flex; align-items: center; gap: 4px; height: 33px; padding-left: 4px; }
.nav .on { background: #2e639d; border-radius: 4px; margin-right: 14px; padding: 0 0 4px 3px; }
.has-badge { position: relative; }
.badge { position: absolute; left: 43px; top: -9px; width: 25px; height: 25px; line-height: 25px; border-radius: 50%; background: #ff7a33; text-align: center; }

/* Sidebar */
.body { flex: 1; min-height: 0; display: flex; }
.side { width: 323px; flex: none; border-left: 7px solid #2e5f90; display: flex; flex-direction: column; background: #fff; }
.side-head { height: 44px; display: flex; align-items: center; background: #43709b; color: #f0f0e4; padding: 4px 20px 0 12px; flex: none; }
.side-head h1 { font-size: 21px; margin: 0 17px 0 6px; }
.side-head span { font-size: 12px; padding-top: 6px; }
.side-head .chev { width: 12px; height: 18px; margin-left: auto; color: #386491; }
.side-tools { display: flex; height: 40px; padding: 0 11px 0 9px; color: #2e5f90; flex: none; }
.side-tools button { width: 39px; }
.side-tools .orange { color: #e2781f; }
.side-tools .sky { color: #32a1dc; }
.side-tools .grey { color: #555; }
.side-tools .end { margin-left: auto; }
.side-tools .end, .side-tools .end + button { width: 37px; }
.side-search { display: flex; align-items: center; padding: 4px 6px 3px 5px; flex: none; }
.side-search .cal { color: #2e5f90; margin: 0 9px 0 17px; }
.side-search .new { width: 74px; height: 34px; border-radius: 5px; background: #2e8bd8; color: #fff; font-size: 13px; gap: 9px; }
.list { flex: 1; min-height: 0; overflow: hidden; position: relative; }
.list h2 { font-size: 17px; line-height: 24px; height: 24px; background: #ebebeb; color: #3c3c3c; padding-left: 11px; }
.list .thumb { position: absolute; right: 3px; top: 1px; width: 5px; height: 83px; border-radius: 3px; background: #8e8e88; }
.list .thumb + h2 { height: 23px; line-height: 22px; }
.item { padding: 3px 11px 2px; }
.item a { display: block; font-size: 17px; font-weight: bold; }
.row { display: flex; justify-content: space-between; }
.st { color: #2f8a5c; }
.sel { background: #ffffe9; color: #6b7285; }
.ver { display: flex; align-items: center; gap: 5px; height: 25px; font-size: 12px; }
.ver svg { margin-bottom: 6px; }
.proc { line-height: 25px; color: #ff7043; }
.proc span { color: #000; }
.udate { text-align: center; font-size: 12px; line-height: 16px; }
.warn { display: flex; align-items: center; gap: 4px; height: 22px; font-size: 13px; }
.warn svg { color: #ff4713; }

/* Main */
.main { flex: 1; min-width: 0; display: flex; flex-direction: column; }
.actions { height: 44px; flex: none; background: #fff; display: flex; align-items: center; justify-content: flex-end; padding: 0 14px 6px 0; font: 16px/24px "Noto Sans", sans-serif; }
.actions button { margin-right: 13px; color: #555; }
.actions .blue { color: #2b5797; }
.actions .maroon { color: #994545; margin-right: 48px; }
.actions .delete { gap: 4px; margin-right: 10px; }
.actions .delete svg { color: #e23c4c; }
.actions .save { background: #75b871; color: #fff; width: 82px; height: 34px; border-radius: 5px; gap: 8px; margin: 4px 0 0; }
.card { margin-left: 12px; margin-right: 14px; background: #fff; border: 1px solid #d5d5d5; border-right: 0; }
.head { height: 136px; flex: none; margin-top: 11px; }
.head-top { display: flex; justify-content: space-between; align-items: center; padding: 8px 23px 0 7px; }
.head-top h2 { font-size: 21px; font-weight: bold; color: #2e5f90; line-height: 24px; }
.state { font-size: 21px; font-weight: bold; color: #767f8b; display: flex; align-items: center; gap: 11px; }
.bulb { width: 12px; height: 18px; color: #b9c38c; }
.tabs-row { display: flex; padding: 22px 22px 0 11px; }
.tile { width: 65px; height: 67px; border-radius: 6px; background: #f2f2f2; display: flex; justify-content: center; padding-top: 3px; color: #c7ced9; }
.tile svg { width: 48px; height: 48px; }
.tabs { flex: 1; margin-left: 2px; display: grid; grid-template-columns: repeat(13, 1fr); padding-top: 9px; }
.tabs a { display: flex; flex-direction: column; align-items: center; color: #20508a; }
.tabs span { display: flex; gap: 4px; line-height: 35px; height: 25px; }
.tabs svg { color: #d3d9e3; }
.tabs small { font-size: 14px; line-height: 18px; color: #999; }
.tabs .t-blue, .t-blue { color: #23568f; }
.tabs .t-red { color: #8b1a1a; }
.t-red2 { color: #9c2f3b; }
.t-green { color: #4fb84f; }

.detail { position: relative; flex: 1; min-height: 0; margin-top: 4px; margin-bottom: 7px; display: flex; align-items: flex-start; padding: 9px 11px 0 13px; }
.form { flex: 1; min-width: 0; padding-top: 4px; }
.sec { font-size: 13px; line-height: 22px; color: #6a94b8; display: flex; align-items: center; gap: 8px; padding-left: 4px; }
.sec::before { content: ""; width: 10px; height: 10px; border: 1px solid #8cb0cc; border-radius: 50%; }
.client { display: flex; height: 119px; }
.c-main { flex: 750; }
.c-mgr { flex: 206; padding-top: 48px; }
.c-role { flex: 203; }
.client span, .cname, .lnk { display: block; }
.cname { font-size: 17px; font-weight: bold; line-height: 24px; }
.pair { display: flex; }
.pair > div { width: 159px; padding-top: 2px; }
.cap { font-size: 12px; color: #999; }
.client .cap { line-height: 22px; }
.pair .lnk { text-decoration: underline; line-height: 26px; color: #23568f; }
.c-mgr .val { line-height: 26px; color: #444; }
.c-role .role { font-size: 17px; line-height: 24px; margin-bottom: 2px; color: #23568f; }
.classif { margin-top: 11px; }
.field { font: 15px/20px "Noto Sans", sans-serif; }
.field label { display: flex; align-items: center; gap: 4px; height: 31px; padding-bottom: 2px; color: #555; }
.field label svg { color: #2d9a94; }
.req::before { content: ""; width: 5px; height: 5px; border-radius: 50%; background: #fa3232; margin-left: 1px; }
.field input, .field select { width: 100%; height: 37px; border: 1px solid #bdbdbd; border-radius: 7px; padding: 0 11px 3px; background: #fff; appearance: none; color: #555; }
.field input { font-size: 16px; }
.field input::placeholder { color: #9fb1c2; opacity: 1; font-size: 15px; }
.sel-box { position: relative; }
.sel-box::before { content: ""; position: absolute; right: 0; top: 0; bottom: 0; width: 33px; background: #2f78ad; border-radius: 0 7px 7px 0; pointer-events: none; }
.sel-box::after { content: ""; position: absolute; right: 12px; top: calc(50% - 6px); width: 9px; height: 9px; border: solid #fff; border-width: 0 2px 2px 0; transform: rotate(45deg); pointer-events: none; }
.sel-box.big select { height: 78px; padding-bottom: 2px; }
.grid3 { display: grid; grid-template-columns: 294fr 255fr 225fr 376fr; gap: 3px; }
.grid4 { display: grid; grid-template-columns: 576fr 226fr 179fr 168fr; gap: 3px; }
.custom { margin-top: 39px; }
.memo { margin-top: 15px; }
.memo-text { font-size: 17px; font-style: italic; line-height: 32px; padding-left: 3px; }

.fin { width: 278px; margin-left: 11px; height: 430px; background: #f7fff9; border: 1px solid #dff2ec; border-radius: 3px; padding: 3px 12px 0; }
.fr { display: flex; justify-content: space-between; line-height: 22px; }
.fin-top .sec { line-height: 24px; }
.fin-top .brown { font-size: 12px; line-height: 20px; }
.brown, .sub { color: #968a85; }
.fin-top { margin-bottom: 26px; }
.num { font-size: 17px; font-weight: bold; line-height: 20px; }
.sub { font-size: 12px; line-height: 24px; margin-bottom: 10px; }
.num.bud { line-height: 22px; margin-top: -2px; }
.sub.bud { margin-bottom: 0; }
.sub i { font-style: normal; color: #c03a48; }
.bar { height: 22px; line-height: 22px; background: #62c484; color: #fff; text-align: center; border-left: 1px solid #2f78ad; }
.fbtns { display: flex; justify-content: center; gap: 3px; margin-top: 7px; }
.fbtns button { height: 28px; border: 1px solid #d3f0dc; border-radius: 5px; background: #fff; padding: 0 7px; gap: 4px; color: #2f8a72; }
.fbtns svg { margin-bottom: 3px; }
.total { margin-top: 49px; font-size: 29px; line-height: 30px; font-weight: bold; text-align: center; }

.rail { width: 32px; margin-left: 16px; display: flex; flex-direction: column; align-items: center; }
.rail button { height: 34px; padding: 2px 4px 0 0; color: #4c4c4c; }
.vt { writing-mode: vertical-rl; width: 32px; border-radius: 4px; font-size: 16px; line-height: 32px; text-align: center; color: #7395b8; }
.key { height: 92px; background: #edf6ff; margin-bottom: 12px; }
.finv { height: 85px; background: #eefdf2; }
.detail > .thumb { position: absolute; right: 2px; top: 2px; width: 5px; height: 379px; border-radius: 3px; background: #949494; }

/* Annotation floating over the form */
.callout { position: absolute; left: 312px; top: -14px; width: 425px; }
.bubble { position: relative; height: 153px; border: 5px solid #f26456; border-radius: 44px; background: #fff; color: #f26456; font-size: 24px; line-height: 30px; text-align: center; padding: 13px 26px 0 24px; box-shadow: 2px 3px 3px #777; }
.arrow { position: absolute; left: -205px; top: 115px; width: 220px; height: 100px; fill: #f26456; filter: drop-shadow(2px 3px 2px #666); }
```
